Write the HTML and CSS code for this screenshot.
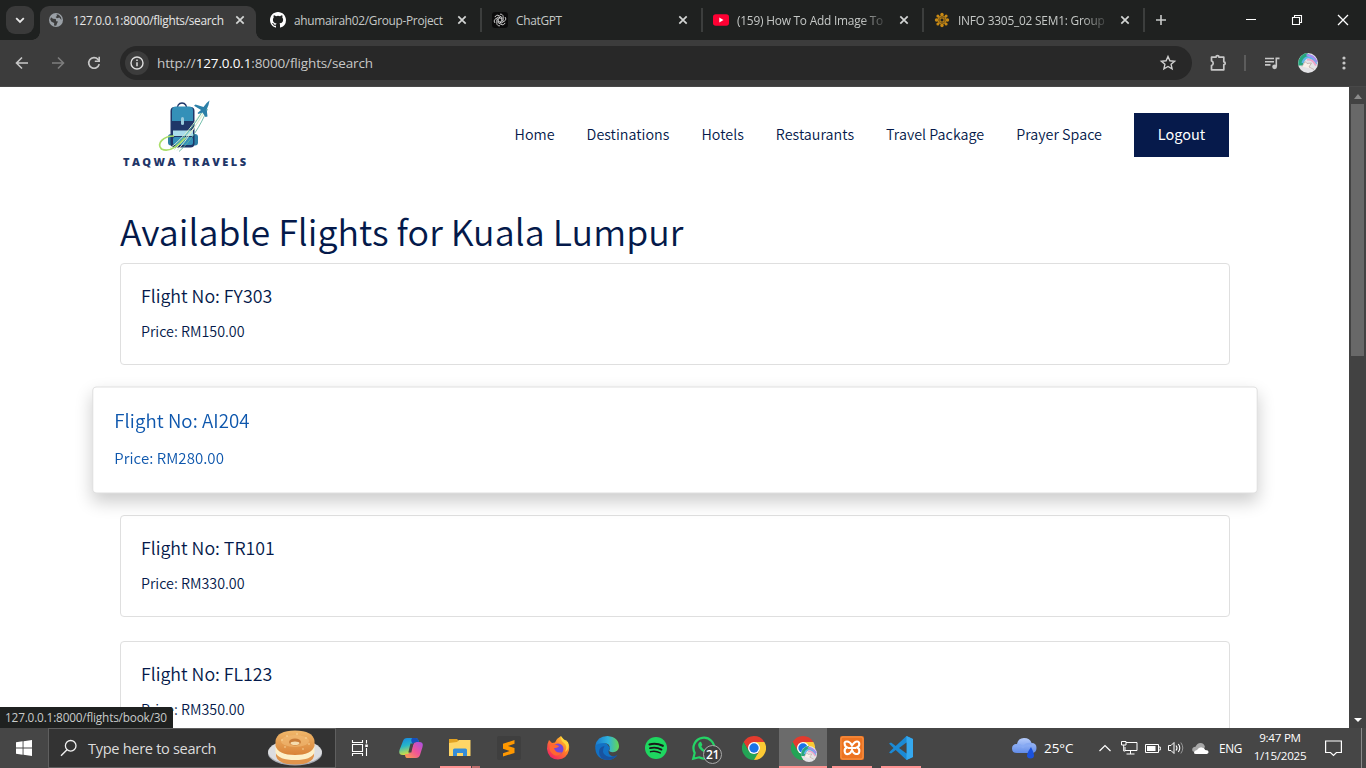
FILE: index.html
```html
<!DOCTYPE html>
<html lang="en">
<head>
<meta charset="utf-8">
<title>Taqwa Travels - Flights</title>
<link rel="stylesheet" href="styles.css">
</head>
<body>
<svg class="defs" width="0" height="0">
  <defs>
    <symbol id="close" viewBox="0 0 10 10"><path d="M1.3 1.3l7.4 7.4M8.7 1.3L1.3 8.7" stroke="currentColor" stroke-width="1.7" fill="none"/></symbol>
    <symbol id="chrome" viewBox="0 0 48 48">
      <path d="M24 0A24 24 0 0 1 44.8 12H24L13.6 30L3.2 12A24 24 0 0 1 24 0Z" fill="#e33b2e"/>
      <path d="M3.2 12L13.6 30L24 36H34.4L24 48A24 24 0 0 1 3.2 12Z" fill="#23a455"/>
      <path d="M44.8 12A24 24 0 0 1 24 48L34.4 30V18L24 12Z" fill="#fcc934"/>
      <circle cx="24" cy="24" r="12" fill="#fff"/><circle cx="24" cy="24" r="9.4" fill="#1a73e8"/>
    </symbol>
    <symbol id="avatar" viewBox="0 0 20 20">
      <circle cx="10" cy="10" r="10" fill="#e4e3e6"/>
      <path d="M.4 12.500C-.5 7 3 1 9 .1L12 2.500C8 4 5.500 7 5 12.500Z" fill="#25a77d"/>
      <path d="M4.500 10C6 4.500 10 3 14 5.500L18.500 11" fill="none" stroke="#5fb6e8" stroke-width="2.200"/>
      <path d="M8.500 2.200Q15.500 2 18.800 9" fill="none" stroke="#a08df0" stroke-width="2.200"/>
      <path d="M9 6.800Q14 5.500 18 12.500" fill="none" stroke="#efa3c8" stroke-width="2"/>
      <path d="M4 13.500L7 8.500L9 10.500L13.500 10L11 14L16 16.500" fill="#f8f0e9" stroke="#bbaaa5" stroke-width=".8"/>
    </symbol>
  </defs>
</svg>
<div class="screen">
  <header class="tabstrip">
    <button class="tab-search"><svg width="10" height="7" viewBox="0 0 10 7"><path d="M1.2 1.2L5 5l3.8-3.8" fill="none" stroke="#e8e8e8" stroke-width="1.8"/></svg></button>
    <div class="tab active">
      <svg class="fav" width="14" height="14" viewBox="0 0 14 14"><circle cx="7" cy="7" r="7" fill="#9aa0a6"/><path d="M2 4.2L4 5.8L6.8 6L7.2 8.3L9 8.5L8 10.5L7.2 12.8L5 12.5L5.2 10L2.5 8.8L1.2 6.5ZM7.5 1.3L8 3L6.6 4L8 5.3L10.3 4.6L12.5 7L12 4.2L9.8 1.8Z" fill="#3c3c3c"/></svg>
      <span class="tab-title t1">127.0.0.1:8000/flights/search</span>
      <svg class="x" width="10" height="10"><use href="#close"/></svg>
    </div>
    <div class="tab">
      <svg class="fav" width="16" height="16" viewBox="0 0 16 16"><path fill="#fff" d="M8 0C3.58 0 0 3.58 0 8c0 3.54 2.29 6.53 5.47 7.59.4.07.55-.17.55-.38 0-.19-.01-.82-.01-1.49-2.01.37-2.53-.49-2.69-.94-.09-.23-.48-.94-.82-1.13-.28-.15-.68-.52-.01-.53.63-.01 1.08.58 1.23.82.72 1.21 1.87.87 2.33.66.07-.52.28-.87.51-1.07-1.78-.2-3.64-.89-3.64-3.95 0-.87.31-1.59.82-2.15-.08-.2-.36-1.02.08-2.12 0 0 .67-.21 2.2.82a7.4 7.4 0 0 1 4 0c1.53-1.04 2.2-.82 2.2-.82.44 1.1.16 1.92.08 2.12.51.56.82 1.27.82 2.15 0 3.07-1.87 3.75-3.65 3.95.29.25.54.73.54 1.48 0 1.07-.01 1.93-.01 2.2 0 .21.15.46.55.38A8.01 8.01 0 0 0 16 8c0-4.42-3.58-8-8-8z"/></svg>
      <span class="tab-title t2">ahumairah02/Group-Project</span>
      <svg class="x" width="10" height="10"><use href="#close"/></svg>
    </div>
    <div class="tab">
      <svg class="fav" width="16" height="16" viewBox="0 0 16 16"><rect width="16" height="16" rx="3" fill="#0b0b0b"/><g fill="none" stroke="#eee" stroke-width=".8"><path id="k" d="M8 2.2a2.6 2.6 0 0 1 3.2 2.6v3.600L8 10.100"/><use href="#k" transform="rotate(60 8 8)"/><use href="#k" transform="rotate(120 8 8)"/><use href="#k" transform="rotate(180 8 8)"/><use href="#k" transform="rotate(240 8 8)"/><use href="#k" transform="rotate(300 8 8)"/></g></svg>
      <span class="tab-title t3">ChatGPT</span>
      <svg class="x" width="10" height="10"><use href="#close"/></svg>
    </div>
    <div class="tab">
      <svg class="fav" width="16" height="16" viewBox="0 0 16 16"><rect y="2.2" width="16" height="11.6" rx="2.8" fill="#ff0033"/><path d="M6.3 5.6v4.8L10.5 8z" fill="#fff"/></svg>
      <span class="tab-title t4">(159) How To Add Image To</span>
      <svg class="x" width="10" height="10"><use href="#close"/></svg>
    </div>
    <div class="tab">
      <svg class="fav" width="16" height="16" viewBox="0 0 16 16"><g fill="none" stroke="#c98a14" stroke-width="1.2"><circle cx="8" cy="8" r="4"/><rect x="6" y="6" width="4" height="4"/></g><g fill="#c98a14"><circle cx="8" cy="2.500" r="1.700"/><circle cx="8" cy="13.500" r="1.700"/><circle cx="2.500" cy="8" r="1.700"/><circle cx="13.500" cy="8" r="1.700"/><circle cx="3.9" cy="3.9" r="1.5"/><circle cx="12.1" cy="3.9" r="1.5"/><circle cx="3.9" cy="12.1" r="1.5"/><circle cx="12.1" cy="12.1" r="1.5"/></g></svg>
      <span class="tab-title t5">INFO 3305_02 SEM1: Group</span>
      <svg class="x" width="10" height="10"><use href="#close"/></svg>
    </div>
    <svg class="newtab" width="12" height="12" viewBox="0 0 12 12"><path d="M6 1v10M1 6h10" stroke="#c8cac9" stroke-width="1.6"/></svg>
    <div class="winctl">
      <svg width="12" height="12" viewBox="0 0 12 12"><path d="M1 5.500h10" stroke="#fff"/></svg>
      <svg width="12" height="12" viewBox="0 0 12 12"><path d="M1.500 3.500h7v7h-7zM3.500 3.500v-2h7v7h-2" fill="none" stroke="#fff" stroke-width="1.100"/></svg>
      <svg width="12" height="12" viewBox="0 0 12 12"><path d="M1 1l10 10M11 1L1 11" stroke="#fff" stroke-width="1.300"/></svg>
    </div>
  </header>

  <div class="toolbar">
    <svg class="nav" width="14" height="14" viewBox="0 0 14 14"><path d="M13 7H1.800M7 1.500L1.500 7L7 12.500" fill="none" stroke="#c7c7c7" stroke-width="1.600"/></svg>
    <svg class="nav" width="14" height="14" viewBox="0 0 14 14"><path d="M1 7h11.200M7 1.500L12.500 7L7 12.500" fill="none" stroke="#7d7d7d" stroke-width="1.600"/></svg>
    <svg class="nav" width="14" height="14" viewBox="0 0 14 14"><path d="M12.200 8.100A5.300 5.300 0 1 1 11 3.400L12 4.500" fill="none" stroke="#c7c7c7" stroke-width="1.700"/><path d="M13 .8v5.200H7.800V4.500h3.600V.8z" fill="#c7c7c7"/></svg>
    <div class="omnibox">
      <span class="info"><svg width="14" height="14" viewBox="0 0 14 14"><circle cx="7" cy="7" r="6" fill="none" stroke="#dedede" stroke-width="1.400"/><path d="M7 6.200v4M7 3.500v1.500" stroke="#dedede" stroke-width="1.500"/></svg></span>
      <span class="url">http://<b>127.0.0.1</b>:8000/flights/search</span>
      <svg class="star" width="16" height="16" viewBox="0 0 16 16"><path d="M8 1.500l1.900 4.300 4.700.4-3.500 3.100 1 4.600L8 11.500l-4.100 2.400 1-4.600-3.500-3.100 4.700-.4z" fill="none" stroke="#d0d0d0" stroke-width="1.400"/></svg>
    </div>
    <div class="actions">
      <svg width="18" height="18" viewBox="0 0 18 18"><path d="M2.500 3.200h4.500a1.500 1.500 0 0 1 3 0h4.800v4.600a1.400 1.400 0 0 1 0 2.800v5.200H2.500v-4.300a2.400 2.400 0 0 0 0-4.600z" fill="none" stroke="#c7c7c7" stroke-width="1.700" stroke-linejoin="round"/></svg>
      <i class="vline"></i>
      <svg width="16" height="14" viewBox="0 0 16 14"><path d="M1 2.500h9M1 5.700h9M1 8.900h5.500M12.300 10.500V2.400H15.500" fill="none" stroke="#c7c7c7" stroke-width="1.600"/><circle cx="10.600" cy="10.800" r="2.400" fill="#c7c7c7"/></svg>
      <svg width="20" height="20"><use href="#avatar"/></svg>
      <svg width="4" height="14" viewBox="0 0 4 14"><g fill="#c7c7c7"><circle cx="2" cy="2" r="1.600"/><circle cx="2" cy="7" r="1.600"/><circle cx="2" cy="12" r="1.600"/></g></svg>
    </div>
  </div>

  <div class="viewport">
    <main class="page">
      <nav class="site-nav">
        <svg class="logo" width="130" height="76" viewBox="0 0 130 76">
          <path d="M58 9q0-8 5-8t5 8" fill="none" stroke="#1f3668" stroke-width="1.400" transform="translate(-1 2)"/>
          <rect x="48" y="34" width="30" height="11.500" rx="3" fill="#2d7ea5"/>
          <rect x="50.500" y="7" width="24" height="40.500" rx="4" fill="#1f3668"/>
          <path d="M52 10.500q0-4 4-4h13q4 0 4 4V21H52z" fill="#3490b8"/>
          <rect x="53" y="30.500" width="20" height="5.500" fill="#a9dceb"/><rect x="53" y="37" width="20" height="8" rx="2" fill="#3490b8"/>
          <rect x="61" y="17" width="3" height="8" rx="1.500" fill="#9ccbdc"/>
          <path d="M87 8C80 20 69 36 54 50M85 10C77 24 68 39 57 50.500M83 10C75 22 64 38 50 48" fill="none" stroke="#dff0cf" stroke-width="1"/>
          <path d="M87.500 9C80 27 70 42 59 51.500M84 9C76 22 66 37 53 48" fill="none" stroke="#62b7a0" stroke-width=".9"/>
          <path d="M54 36C43 36 36 44 41.500 49C48 52.500 57 47 65 38" fill="none" stroke="#a9de68" stroke-width="1.700"/>
          <path d="M89.500 .5q-3 2-6 6.500l-8-2.500-1.500 1.300 7 4.200-3.500 3 1 1 4-1.500 3 4.500 2-.5-.8-7Q89 4.500 89.500 .5z" fill="#2c80a8"/>
          <text class="logo-text" x="3" y="66" textLength="123">TAQWA TRAVELS</text>
        </svg>
        <ul class="links"><li>Home</li><li>Destinations</li><li>Hotels</li><li>Restaurants</li><li>Travel Package</li><li>Prayer Space</li></ul>
        <a class="logout">Logout</a>
      </nav>
      <h1>Available Flights for Kuala Lumpur</h1>
      <section class="flights">
        <article class="card"><h5>Flight No: FY303</h5><p>Price: RM150.00</p></article>
        <article class="card hover"><h5>Flight No: AI204</h5><p>Price: RM280.00</p></article>
        <article class="card"><h5>Flight No: TR101</h5><p>Price: RM330.00</p></article>
        <article class="card"><h5>Flight No: FL123</h5><p>Price: RM350.00</p></article>
      </section>
    </main>
    <div class="scrollbar">
      <svg width="8" height="5" viewBox="0 0 8 5"><path d="M0 5h8L4 0z" fill="#8a8a8a"/></svg>
      <i class="thumb"></i>
      <svg class="down" width="8" height="4" viewBox="0 0 8 4"><path d="M0 0h8L4 4z" fill="#fff"/></svg>
    </div>
    <div class="status"><span>127.0.0.1:8000/flights/book/30</span></div>
  </div>

  <footer class="taskbar">
    <div class="start"><svg width="16" height="16" viewBox="0 0 16 16"><path d="M0 2.300L6.600 1.300V7.500H0zM7.500 1.200L16 0v7.500H7.500zM0 8.500h6.600v6.200L0 13.700zM7.500 8.500H16V16l-8.500-1.200z" fill="#fff"/></svg></div>
    <div class="search">
      <svg width="18" height="18" viewBox="0 0 18 18"><circle cx="10.700" cy="6.800" r="5.300" fill="none" stroke="#f0f0f0" stroke-width="1.300"/><path d="M7 10.700L1 16.700" stroke="#f0f0f0" stroke-width="1.400"/></svg>
      <span>Type here to search</span>
      <svg class="bagel" width="56" height="38" viewBox="0 0 56 38"><defs><linearGradient id="bg" x2="0" y2="1"><stop stop-color="#f0b86b"/><stop offset="1" stop-color="#d98338"/></linearGradient></defs>
        <ellipse cx="28" cy="24.500" rx="27" ry="12" fill="#a8acb4"/><ellipse cx="28" cy="23" rx="27" ry="12" fill="#dcdde0"/>
        <path d="M9 21h38v6q-2 8.500-19 8.500T9 27z" fill="#e0944c"/><path d="M8.500 17h39v6.500q-3 7.500-19.500 7.500T8.500 23.500z" fill="#fdf0c8"/>
        <path d="M8.500 12Q10 1.500 28 1.500T47.500 12v5q-3 9-19.500 9T8.500 17z" fill="url(#bg)"/><ellipse cx="28" cy="12" rx="14" ry="6" fill="#f2be79" opacity=".55"/><ellipse cx="28" cy="13" rx="6" ry="3.500" fill="#c87c38"/><ellipse cx="28" cy="14.300" rx="4.500" ry="1.800" fill="#f5dcae"/>
        <g fill="#ffe6b0"><circle cx="15" cy="11" r=".7"/><circle cx="20" cy="7" r=".7"/><circle cx="30" cy="5" r=".7"/><circle cx="39" cy="9" r=".7"/><circle cx="18" cy="18" r=".7"/><circle cx="36" cy="20" r=".7"/><circle cx="42" cy="15" r=".7"/></g></svg>
    </div>
    <div class="app taskview"><svg width="18" height="16" viewBox="0 0 18 16"><path d="M1.500 0v2.500h10V0M1.500 16v-2.500h10V16M1.500 4.500h10v7h-10zM15.500 0v3.500M15.500 8v8" fill="none" stroke="#fff" stroke-width="1.100"/><rect x="14.300" y="4.500" width="2.500" height="2.500" fill="#fff"/></svg></div>
    <div class="app"><svg width="24" height="22" viewBox="0 0 24 22"><defs><linearGradient id="c1" x2=".3" y2="1"><stop stop-color="#1684e4"/><stop offset=".5" stop-color="#27b7c8"/><stop offset="1" stop-color="#d9e03c"/></linearGradient><linearGradient id="c2" x1="1" x2="0" y2="1"><stop stop-color="#a650e8"/><stop offset=".5" stop-color="#f05597"/><stop offset="1" stop-color="#f9a348"/></linearGradient></defs>
      <path d="M8 1h9q2 0 3 4h-3q-3 0-4 4l-2 6q-1 3-4 3H4q-5 0-3.500-5L4 4q1-3 4-3z" fill="url(#c1)"/><path d="M17 21H8q-2 0-2-4h2q3 0 4-4l2-5q1-3 4-3h2q5 0 3.500 5L21 18q-1 3-4 3z" fill="url(#c2)"/><path d="M13 1h4q2 0 3 4h-3q-2 0-3 2-3-3-1-6z" fill="#174fbd"/><path d="M11.500 6.500h3L12.300 15.500h-3z" fill="#464646"/></svg></div>
    <div class="app line2"><svg width="22" height="20" viewBox="0 0 22 20"><path d="M0 1h8l2 2h-1v4H0z" fill="#e2a222"/><path d="M0 5l8-1 2-2h11.500v16H0z" fill="#ffd667"/><path d="M4 18v-6q0-1.500 1.500-1.500h11q1.500 0 1.500 1.500v6h-4v-3H8v3z" fill="#368dd8"/></svg></div>
    <div class="app"><svg width="24" height="24" viewBox="0 0 24 24"><rect width="24" height="24" rx="2" fill="#3f3f3f"/><path d="M17.500 4L6 7.800v5l6.700 2.200L6 17.200V20.500l11.500-3.600v-5L10.800 10l6.700-2.200z" fill="#ff9800"/></svg></div>
    <div class="app"><svg width="24" height="24" viewBox="0 0 24 24"><defs><linearGradient id="f1" x1="1" x2=".2" y2="1"><stop stop-color="#ffe23c"/><stop offset=".5" stop-color="#ff7c28"/><stop offset="1" stop-color="#f11d68"/></linearGradient></defs><path d="M3 4l3 3 3-.5Q11 2 15 0q-.5 3 3 5l2-1q4 4 3 10-2 9-11 9.500Q2 23 1 13 .8 8 3 4z" fill="url(#f1)"/><circle cx="12" cy="13" r="5.500" fill="#7547d8"/><path d="M4 9q4-2 9 1-1 2-5 2 2 6 8 4-3 5-8 3-6-4-4-10z" fill="#ff6731"/><path d="M15 0q-1 4 3 7t1 9q5-3 3-10-2 0-3-2-1 0-4-4z" fill="#ffd63a"/></svg></div>
    <div class="app"><svg width="24" height="24" viewBox="0 0 24 24"><defs><linearGradient id="e1" x2="1"><stop stop-color="#1878cf"/><stop offset=".55" stop-color="#2fb2dc"/><stop offset="1" stop-color="#66d84f"/></linearGradient></defs><path d="M.2 10Q5 4 12 8L15 12q-3 4 0 7 4 3 7.500 0Q19 24 12 24 0 23 .2 10z" fill="#1271c4"/><path d="M.2 10Q2 0 12.500 0 24 1 24 11q-1 6-8 5-3-1-1-3Q15 7 9 7 3 7 .2 10z" fill="url(#e1)"/><path d="M9.500 10q-4 7 2 10 6 2.500 11-1.500-3.500 5.500-10.500 5.500Q4 23 4 16q0-5 5.500-6z" fill="#1853a0"/></svg></div>
    <div class="app"><svg width="22" height="22" viewBox="0 0 22 22"><circle cx="11" cy="11" r="11" fill="#1ed760"/><g fill="none" stroke="#191919" stroke-linecap="round"><path d="M4.500 7.500Q11 5.500 17.800 8.800" stroke-width="2.100"/><path d="M5 11.200q6-1.700 11.500 1.400" stroke-width="1.800"/><path d="M5.500 14.700q5-1.400 9.800 1.200" stroke-width="1.400"/></g></svg></div>
    <div class="app wa"><svg width="24" height="24" viewBox="0 0 24 24"><path d="M1.200 22.800L2.700 17A10.400 10.400 0 1 1 7 21.300z" fill="none" stroke="#25d366" stroke-width="2.200"/><path d="M7.200 6.500q1.500-1.700 2.300.2l.8 2q0 .7-1 1.700 1.500 3 4.700 4 1-1.700 1.800-1.200l2.200 1q.8.500-.5 2.200-2 1.900-6-.3-5-3-5.400-7 0-1.500 1.100-2.600z" fill="#25d366"/></svg><em>21</em></div>
    <div class="app"><svg width="24" height="24"><use href="#chrome"/></svg></div>
    <div class="app current"><svg width="24" height="24"><use href="#chrome"/></svg><svg class="mini" width="16" height="16" viewBox="0 0 20 20"><use href="#avatar" width="20" height="20"/></svg></div>
    <div class="app line"><svg width="24" height="24" viewBox="0 0 24 24"><rect width="24" height="24" rx="2" fill="#ed7321"/><rect x="1" y="1" width="22" height="22" rx="2" fill="none" stroke="#f7964a"/><path d="M12 9.500q-2-4-5-4T4.700 8q0 2.500 2.500 3.500-3 .8-2.500 4 .5 3 3.500 2.500 2.500-.5 3.800-4 1.300 3.500 3.800 4 3 .5 3.500-2.500.5-3.200-2.500-4 2.500-1 2.500-3.500T17 5.500t-5 4zM8 12h8" fill="none" stroke="#fff" stroke-width="2.100"/></svg></div>
    <div class="app line"><svg width="24" height="24" viewBox="0 0 24 24"><path d="M17.500 0L24 3v18l-6.500 3L6.700 14 2 17.500 0 16.500 4.500 12 0 7.500l2-1L6.700 10z" fill="#1b8ad6"/><path d="M17.500 0L24 3v18l-6.500 3z" fill="#35a8ee"/><path d="M17.500 6.500v11L10 12z" fill="#464646"/></svg></div>
    <div class="tray">
      <svg class="weather" width="25" height="22" viewBox="0 0 25 22"><defs><linearGradient id="w" x2="0" y2="1"><stop stop-color="#b5cbfb"/><stop offset="1" stop-color="#618ce8"/></linearGradient></defs><path d="M5 16q-5 0-5-4.500T5 7q1-6 7-6t7.500 5q5 0 5 5t-5 5z" fill="url(#w)"/><path d="M2 9q5-3 9 1 4-4 9-3" fill="none" stroke="#86a9f3" stroke-width="2"/><path d="M19 10q-4 6-4 8.500 0 3 3.500 3t3.500-3Q22 16 19 10z" fill="#1b52dd"/></svg>
      <span class="temp">25°C</span>
      <svg class="chev" width="12" height="8" viewBox="0 0 12 8"><path d="M.5 7L6 1.500 11.500 7" fill="none" stroke="#fff" stroke-width="1.200"/></svg>
      <svg class="ti" width="17" height="14" viewBox="0 0 17 14"><path d="M5 1.500h11v8H4V6M9.500 9.500v3.500M5.500 13h8M.5.500h4.500v3.500H.5zM2.700 4v6h1.500" fill="none" stroke="#fff" stroke-width="1"/></svg>
      <svg class="ti" width="16" height="9" viewBox="0 0 16 9"><path d="M.5.500h13v8H.5zM14 3h1.300v3H14" fill="none" stroke="#fff"/><rect x="2" y="2" width="8.500" height="5" fill="#fff"/></svg>
      <svg class="ti" width="17" height="14" viewBox="0 0 17 14"><path d="M.5 4.500H3L6 1.500v11l-3-3H.5z" fill="none" stroke="#fff"/><path d="M8 4.500q2 2.500 0 5M10.300 3q3 4 0 8" fill="none" stroke="#fff" stroke-width="1.100"/><path d="M12.800 1.500q4 5.500 0 11" fill="none" stroke="#999"/></svg>
      <svg class="ti cloud" width="17" height="11" viewBox="0 0 17 11"><path d="M3.500 9Q0 9 .2 6.500.5 4 3.500 3.800 5 0 8.500 0T13 4l-4 5z" fill="#a7a7a7"/><path d="M2 10q0-2.500 3-3 2-3 4.700-2.600 3 .4 3.500 2.600 3.300 0 3.300 2 0 2-3 2H4q-2 0-2-1z" fill="#fff"/></svg>
      <span class="lang">ENG</span>
      <div class="clock"><span>9:47 PM</span><span class="date">1/15/2025</span></div>
      <svg class="note" width="17" height="17" viewBox="0 0 17 17"><path d="M.6 1h15.800v11.500h-5L8.500 15.500l-3-3H.6z" fill="none" stroke="#fff" stroke-width="1.200"/></svg>
      <i class="desk"></i>
    </div>
  </footer>
</div>
</body>
</html>
```
FILE: styles.css
```css
* { box-sizing: border-box; margin: 0; padding: 0; }
body { width: 1366px; height: 768px; overflow: hidden; }
svg { display: block; flex: none; overflow: visible; }
.defs { position: absolute; }
.screen { width: 1366px; height: 768px; display: flex; flex-direction: column; overflow: hidden; font-family: "Open Sans", "Noto Sans", sans-serif; white-space: nowrap; }

/* Browser tabs */
.tabstrip { height: 40px; flex: none; background: #1f2120; display: flex; align-items: center; }
.tab-search { width: 28px; height: 28px; margin: 0 6px; border: 0; border-radius: 9px; background: #3a3a3a; display: grid; place-items: center; flex: none; }
.tab { width: 221px; height: 24px; display: flex; align-items: center; padding: 0 13px 0 10px; border-right: 2px solid #3c3e3d; flex: none; color: #c5c8c6; }
.tab:nth-child(3) { margin-left: 2px; width: 224px; padding-left: 12px; padding-right: 13px; }
.tab.active { width: 216px; height: 34px; margin-top: 6px; padding: 0 11px 6px 9px; border: 0; border-radius: 9px 9px 0 0; background: #3c3c3c; color: #e6e6e6; position: relative; }
.tab.active::before, .tab.active::after { content: ""; position: absolute; bottom: 0; width: 8px; height: 8px; }
.tab.active::before { left: -8px; background: radial-gradient(circle at 0 0, transparent 7.5px, #3c3c3c 8px); }
.tab.active::after { right: -8px; background: radial-gradient(circle at 100% 0, transparent 7.5px, #3c3c3c 8px); }
.tab-title { flex: 1; min-width: 0; margin: 0 14px 0 8px; font-size: 11.9px; letter-spacing: -.31px; line-height: 18px; }
.tab.active .tab-title { margin: 0 8px 0 10px; }
.t4, .t5 { letter-spacing: -.22px; -webkit-mask-image: linear-gradient(90deg, #000 84%, transparent 103%); mask-image: linear-gradient(90deg, #000 84%, transparent 103%); }
.x { color: #d3d5d4; }
.newtab { margin-left: 10px; }
.winctl { margin-left: auto; padding-right: 17px; display: flex; gap: 34px; }

/* Toolbar */
.toolbar { height: 47px; flex: none; background: #3c3c3c; border-bottom: 1px solid #484848; display: flex; align-items: center; padding: 0 20px 0 15px; }
.nav { margin-right: 22px; }
.omnibox { width: 1072px; height: 34px; margin-left: -3px; border-radius: 17px; background: #282828; display: flex; align-items: center; padding: 0 16px 0 5px; }
.info { width: 24px; height: 24px; border-radius: 50%; background: #3c3c3c; display: grid; place-items: center; }
.url { flex: 1; margin-left: 8px; font-size: 13.5px; letter-spacing: -.14px; line-height: 20px; color: #c7c7c7; }
.url b { font-weight: 400; color: #fff; }
.actions { margin-left: auto; display: flex; align-items: center; }
.actions .vline { width: 2px; height: 16px; background: #5c5c5c; margin: 0 18px 0 17px; }
.actions svg:nth-of-type(2) { margin-right: 18px; }
.actions svg:nth-of-type(3) { margin-right: 24px; }

/* Web page */
.viewport { height: 641px; flex: none; position: relative; display: flex; overflow: hidden; background: #fff; }
.page { width: 1349px; height: 641px; overflow: hidden; padding: 0 119px 0 120px; font-family: "Noto Sans CJK SC", sans-serif; font-weight: 350; color: #04194a; }
.site-nav { height: 120px; padding-bottom: 24px; display: flex; align-items: center; }
.logo { margin-top: 6px; }
.logo-text { font: 900 11px "Open Sans", sans-serif; fill: #1f3668; }
.links { margin-left: auto; display: flex; gap: 32px; list-style: none; font-size: 14.3px; letter-spacing: .03px; line-height: 24px; margin-top: -2px; }
.logout { margin-left: 32px; width: 95px; height: 44px; background: #061a4b; color: #fff; font-size: 14.5px; font-weight: 400; line-height: 42px; text-align: center; margin-right: 1px; }
h1 { font-size: 35.8px; font-weight: 350; letter-spacing: .03px; line-height: 48px; height: 48px; margin-top: -1px; margin-bottom: 9px; }
.flights { display: flex; flex-direction: column; gap: 24px; }
.card { height: 102px; flex: none; border: 1px solid #dfdfdf; border-radius: 4px; padding: 19px 20px; background: #fff; }
.card h5 { font-size: 17.8px; font-weight: 350; line-height: 24px; margin-bottom: 12px; }
.card p { font-size: 14.3px; line-height: 24px; }
.card.hover { transform: scale(1.05); box-shadow: 0 8px 16px rgba(0,0,0,.2); color: #0e57ad; z-index: 1; }
.card.hover h5, .card.hover p { letter-spacing: .06px; }

.scrollbar { width: 17px; background: #424242; display: flex; flex-direction: column; align-items: center; padding: 7px 0 6px; }
.thumb { width: 13px; height: 252px; margin-top: 5px; background: #686868; }
.down { margin-top: auto; }
.status { position: absolute; left: 0; bottom: 0; width: 173px; height: 21px; background: #1f2120; border-radius: 0 4px 0 0; color: #c8cbca; font-size: 11.8px; letter-spacing: -.18px; line-height: 21px; padding-left: 5px; }

/* Taskbar */
.taskbar { height: 40px; flex: none; background: #464646; display: flex; align-items: stretch; color: #fff; }
.start { width: 48px; display: grid; place-items: center; }
.search { width: 288px; border: 1px solid #5f5f5f; background: #333; display: flex; align-items: center; padding-left: 11px; font-size: 14.6px; letter-spacing: -.32px; color: #dcdcdc; }
.search span { margin-left: 10px; flex: 1; }
.bagel { margin-right: 12px; }
.app { width: 49px; display: flex; align-items: center; justify-content: center; position: relative; }
.app.taskview { width: 50px; padding-right: 2px; }
.line::after, .line2::after, .current::after { content: ""; position: absolute; bottom: 0; left: 5px; width: 40px; height: 2px; background: #ff9393; }
.line2::after { background: linear-gradient(90deg, #ff9393 31px, #464646 31px 32px, #bd6c6c 32px); }
.current { background: linear-gradient(90deg, #464646 1px, #6b6b6b 1px); }
.current::after { left: 1px; width: 48px; }
.mini { position: absolute; left: 23px; top: 18px; }
.wa em { position: absolute; left: 23px; top: 17px; width: 19px; height: 19px; border: 1px solid #aaa; border-radius: 50%; background: #3f3f3f; font: 600 12px/17px "Open Sans", sans-serif; letter-spacing: -.4px; text-align: center; }
.wa svg { margin-right: 1px; }
.tray { margin-left: auto; width: 354px; display: flex; align-items: center; }
.temp { width: 55px; margin-left: 7px; font-size: 13.4px; }
.chev { margin-right: 10px; }
.ti { margin-right: 7px; }
.ti.cloud { margin-right: 10px; }
.lang { width: 24px; font-size: 11.8px; letter-spacing: -.3px; }
.clock { width: 52px; margin-left: 11px; display: flex; flex-direction: column; align-items: center; font-size: 11.6px; letter-spacing: -.25px; line-height: 18px; padding-bottom: 2px; }
.note { margin-left: 19px; }
.desk { width: 1px; height: 40px; background: #8a8a8a; margin-left: auto; margin-right: 4px; }
```
